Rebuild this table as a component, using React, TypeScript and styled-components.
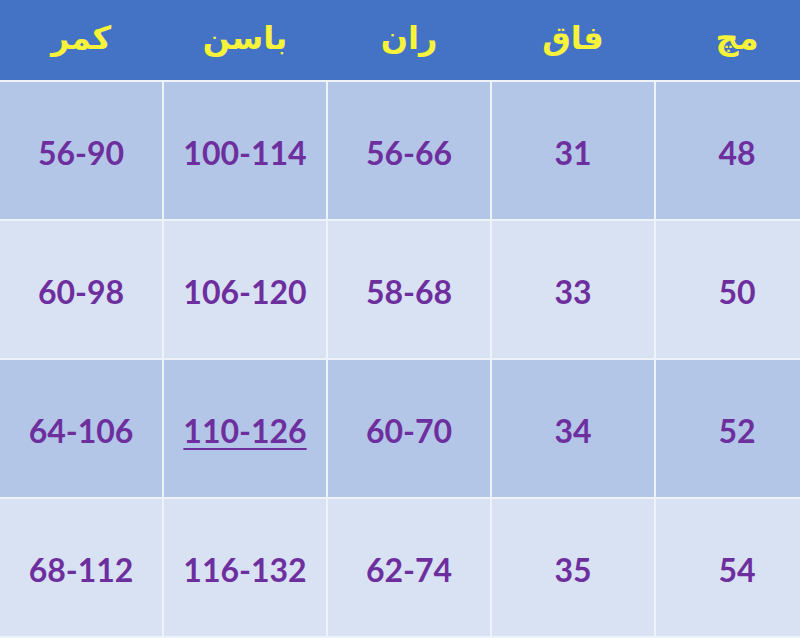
import React from 'react';
import styled, { createGlobalStyle } from 'styled-components';

const GlobalStyle = createGlobalStyle`
  html, body {
    margin: 0;
    padding: 0;
    background: #eef2f9;
  }
  #root {
    width: 800px;
    height: 638px;
    overflow: hidden;
  }
`;

const TableWrapper = styled.div`
  width: 800px;
  height: 638px;
  overflow: hidden;
  direction: rtl;
  background: #eef2f9;
`;

const Table = styled.div`
  width: 818px;
  margin-right: -18px;
  display: flex;
  flex-direction: column;
  gap: 2px;
`;

const HeaderRow = styled.div`
  display: grid;
  grid-template-columns: repeat(5, 162px);
  column-gap: 2px;
  height: 80px;
  background: #4472c4;
`;

const HeaderCell = styled.div`
  display: flex;
  align-items: center;
  justify-content: center;
  padding-bottom: 4px;
  color: #f6f33a;
  font-family: 'DejaVu Sans', sans-serif;
  font-weight: 700;
  font-size: 32px;
`;

const Row = styled.div<{ $shade: 'dark' | 'light' }>`
  display: grid;
  grid-template-columns: repeat(5, 162px);
  column-gap: 2px;
  height: 137px;
  & > div {
    background: ${(p) => (p.$shade === 'dark' ? '#b4c6e7' : '#d9e2f3')};
  }
`;

const Cell = styled.div<{ $underline?: boolean }>`
  display: flex;
  align-items: center;
  justify-content: center;
  padding-top: 3px;
  direction: ltr;
  color: #6e2f9e;
  font-family: Lato, 'Open Sans', sans-serif;
  font-weight: 700;
  font-size: 32px;
  text-decoration: ${(p) => (p.$underline ? 'underline' : 'none')};
  text-decoration-thickness: 2px;
  text-underline-offset: 5px;
`;

const headers = ['مچ', 'فاق', 'ران', 'باسن', 'کمر'];

const rows = [
  ['48', '31', '56-66', '100-114', '56-90'],
  ['50', '33', '58-68', '106-120', '60-98'],
  ['52', '34', '60-70', '110-126', '64-106'],
  ['54', '35', '62-74', '116-132', '68-112'],
];

export default function App() {
  return (
    <>
      <GlobalStyle />
      <TableWrapper>
        <Table>
          <HeaderRow>
            {headers.map((h) => (
              <HeaderCell key={h}>{h}</HeaderCell>
            ))}
          </HeaderRow>
          {rows.map((row, i) => (
            <Row key={i} $shade={i % 2 === 0 ? 'dark' : 'light'}>
              {row.map((v, j) => (
                <Cell key={j} $underline={i === 2 && j === 3}>
                  {v}
                </Cell>
              ))}
            </Row>
          ))}
        </Table>
      </TableWrapper>
    </>
  );
}
